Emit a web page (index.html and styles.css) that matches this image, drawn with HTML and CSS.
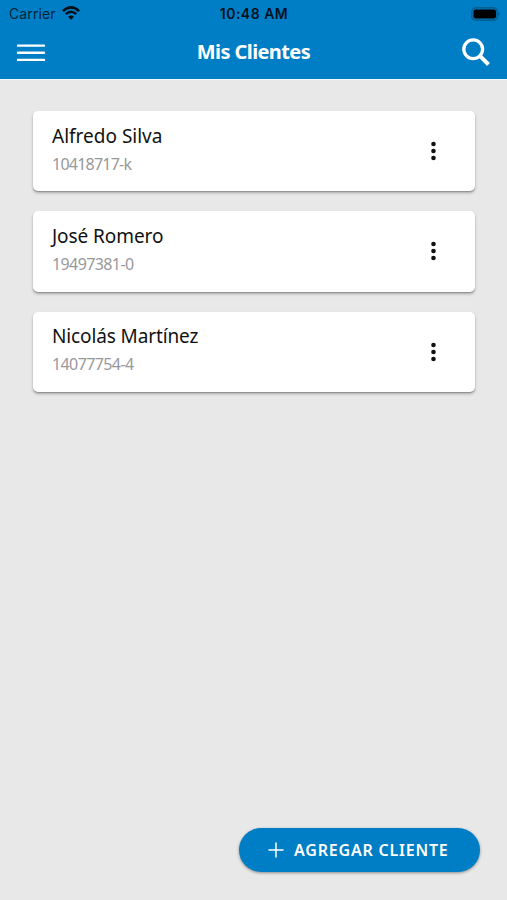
FILE: index.html
```html
<!DOCTYPE html>
<html lang="es">
<head>
<meta charset="utf-8">
<title>Mis Clientes</title>
<link rel="stylesheet" href="styles.css">
</head>
<body>
<header class="top">
  <div class="status">
    <div class="carrier"><span>Carrier</span>
      <svg width="18" height="14" viewBox="0 0 18 14" fill="none" stroke="#001019" stroke-width="2.5"><path d="M.9 5.1Q9-2.4 17.1 5.1M3.8 8.1Q9 3.3 14.2 8.1"/><path d="M9 13.7 6 10.7Q9 8.1 12 10.7Z" fill="#001019" stroke="none"/></svg>
    </div>
    <time class="clock">10:48 AM</time>
    <svg class="battery" width="30" height="14" viewBox="0 0 30 14"><rect x=".8" y=".8" width="25.4" height="12.4" rx="3.8" fill="none" stroke="#005583" stroke-width="1.2"/><rect x="2.5" y="2.5" width="22.5" height="9" rx="2" fill="#000"/><path d="M27.5 4.8Q30 7 27.5 9.2Z" fill="#005583"/></svg>
  </div>
  <nav class="bar">
    <svg width="30" height="20" viewBox="0 0 30 20" stroke="#fff" stroke-width="2.4" stroke-linecap="round"><path d="M2 3.6H28M2 10.7H28M2 17.9H28"/></svg>
    <h1>Mis Clientes</h1>
    <svg width="30" height="30" viewBox="0 0 30 30" fill="none" stroke="#fff" stroke-width="3.3"><circle cx="12.2" cy="12.2" r="9.4"/><path d="M18.6 18.6 27.5 27.5" stroke-width="4"/></svg>
  </nav>
</header>
<main class="list">
  <article class="card"><div><h2 class="n1">Alfredo Silva</h2><p class="k">10418717-k</p></div><svg width="6" height="20" viewBox="0 0 6 20" fill="#111"><circle cx="3.5" cy="3" r="2.3"/><circle cx="3.5" cy="10" r="2.3"/><circle cx="3.5" cy="17" r="2.3"/></svg></article>
  <article class="card"><div><h2 class="n2">José Romero</h2><p>19497381-0</p></div><svg width="6" height="20" viewBox="0 0 6 20" fill="#111"><circle cx="3.5" cy="3" r="2.3"/><circle cx="3.5" cy="10" r="2.3"/><circle cx="3.5" cy="17" r="2.3"/></svg></article>
  <article class="card"><div><h2 class="n3">Nicolás Martínez</h2><p>14077754-4</p></div><svg width="6" height="20" viewBox="0 0 6 20" fill="#111"><circle cx="3.5" cy="3" r="2.3"/><circle cx="3.5" cy="10" r="2.3"/><circle cx="3.5" cy="17" r="2.3"/></svg></article>
</main>
<button class="add"><svg width="16" height="16" viewBox="0 0 16 16" stroke="#fff" stroke-width="1.5" stroke-linecap="round"><path d="M8 1V15M1 8H15"/></svg><span>AGREGAR CLIENTE</span></button>
</body>
</html>
```

FILE: styles.css
```css
* { box-sizing: border-box; margin: 0; padding: 0; }
body {
  height: 900px;
  display: flex;
  flex-direction: column;
  background: #e8e8e8;
  font-family: "Noto Sans", sans-serif;
}
.top { height: 79px; background: #007ec5; box-shadow: 0 1px 0 #f2f7f9; }
.status {
  height: 27px;
  display: grid;
  grid-template-columns: 1fr auto 1fr;
  align-items: center;
  padding: 0 6px 0 9px;
  font: 14px/27px Inter, sans-serif;
  color: #00243a;
}
.carrier { display: flex; align-items: center; gap: 6px; }
.carrier span { letter-spacing: 0.12px; }
.carrier svg { margin-top: -2px; }
.clock { margin: -1px 2px 0 0; font-weight: 600; font-size: 14px; letter-spacing: 0.5px; color: #00121e; }
.battery { justify-self: end; }
.bar {
  height: 50px;
  display: grid;
  grid-template-columns: 1fr auto 1fr;
  align-items: center;
  padding: 0 16px;
  color: #fff;
}
.bar h1 { font-size: 20px; line-height: 26px; font-weight: 700; letter-spacing: -0.6px; }
.bar > svg:last-child { justify-self: end; }
.list { display: flex; flex-direction: column; gap: 20px; padding: 32px 32px 0 33px; }
.card {
  height: 80.3px;
  display: flex;
  justify-content: space-between;
  align-items: center;
  padding: 0 39px 0 19px;
  border-radius: 5px;
  background: #fff;
  box-shadow: 0 2px 3px #00000045, 0 1px 1px #00000030;
}
.card h2 { font-size: 19px; line-height: 28px; font-weight: 400; color: #111; white-space: nowrap; }
.card p { font-size: 16px; line-height: 28px; font-weight: 400; color: #98989b; letter-spacing: -0.6px; }
.card > div { margin-top: -3px; }
.card .k { letter-spacing: -0.77px; }
.n1 { letter-spacing: 0; }
.n2 { letter-spacing: -0.08px; }
.n3 { letter-spacing: -0.12px; }
.add {
  width: 241px;
  height: 44px;
  margin: auto 27px 28px auto;
  display: flex;
  align-items: center;
  gap: 10px;
  padding-left: 29px;
  border: 0;
  border-radius: 22px;
  background: #007ec5;
  color: #fff;
  box-shadow: 0 1px 3px #00000066;
  font: 600 16px/24px "Noto Sans", sans-serif;
  letter-spacing: 0.8px;
  white-space: nowrap;
}
```
